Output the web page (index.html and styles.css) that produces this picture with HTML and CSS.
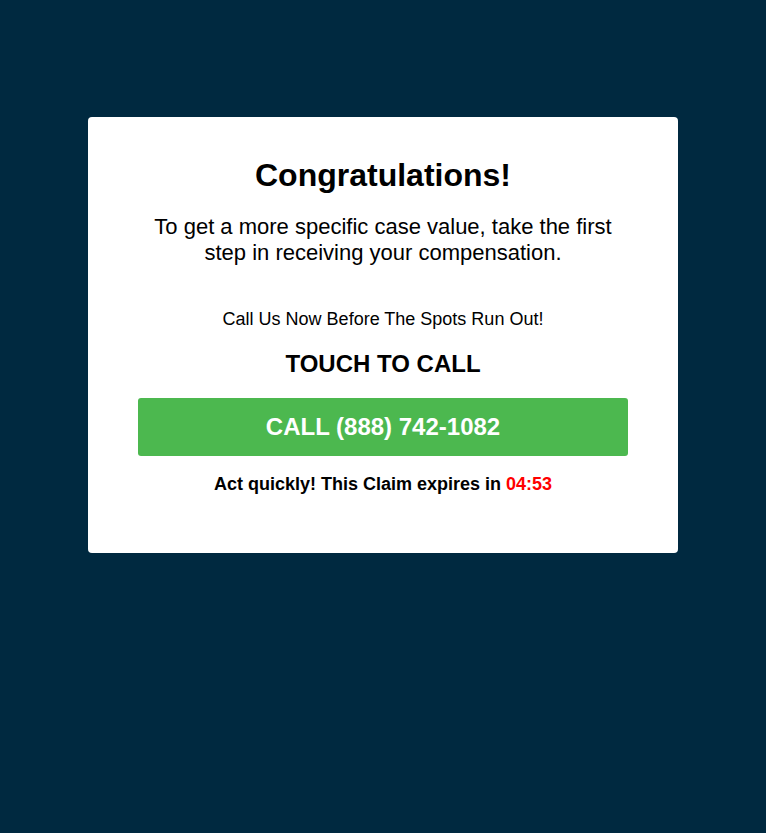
FILE: index.html
```html
<!DOCTYPE html>
<html>
<head>
<meta charset="utf-8">
<link rel="stylesheet" href="styles.css">
</head>
<body>
<main class="page">
  <section class="card">
    <h1 class="title">Congratulations!</h1>
    <p class="lead">To get a more specific case value, take the first step in receiving your compensation.</p>
    <p class="note">Call Us Now Before The Spots Run Out!</p>
    <h2 class="touch">TOUCH TO CALL</h2>
    <a class="call-btn" href="#">CALL (888) 742-1082</a>
    <p class="timer">Act quickly! This Claim expires in <span class="count">04:53</span></p>
  </section>
</main>
</body>
</html>
```
FILE: styles.css
```css
html, body {
  margin: 0;
  padding: 0;
  background: #002940;
  font-family: "Liberation Sans", Arial, sans-serif;
  color: #000;
}
.page {
  display: flex;
  justify-content: center;
  align-items: flex-start;
  padding-top: 117px;
  min-height: 833px;
  box-sizing: border-box;
}
.card {
  width: 590px;
  box-sizing: border-box;
  background: #fff;
  border-radius: 4px;
  padding: 40px 50px 59px;
  text-align: center;
  display: flex;
  flex-direction: column;
  align-items: center;
}
.title {
  margin: 0;
  font-size: 32px;
  line-height: 36px;
  font-weight: bold;
}
.lead {
  margin: 21px 0 0;
  font-size: 22px;
  line-height: 26px;
  padding: 0 10px;
}
.note {
  margin: 43px 0 0;
  font-size: 18px;
  line-height: 20px;
}
.touch {
  margin: 22px 0 0;
  font-size: 24px;
  line-height: 26px;
  font-weight: bold;
}
.call-btn {
  margin-top: 21px;
  width: 100%;
  height: 58px;
  display: flex;
  align-items: center;
  justify-content: center;
  background: #4cb84f;
  color: #fff;
  border-radius: 3px;
  font-size: 24px;
  font-weight: bold;
  text-decoration: none;
}
.timer {
  margin: 18px 0 0;
  font-size: 18px;
  line-height: 20px;
  font-weight: bold;
}
.count {
  color: #ff0000;
}
```
